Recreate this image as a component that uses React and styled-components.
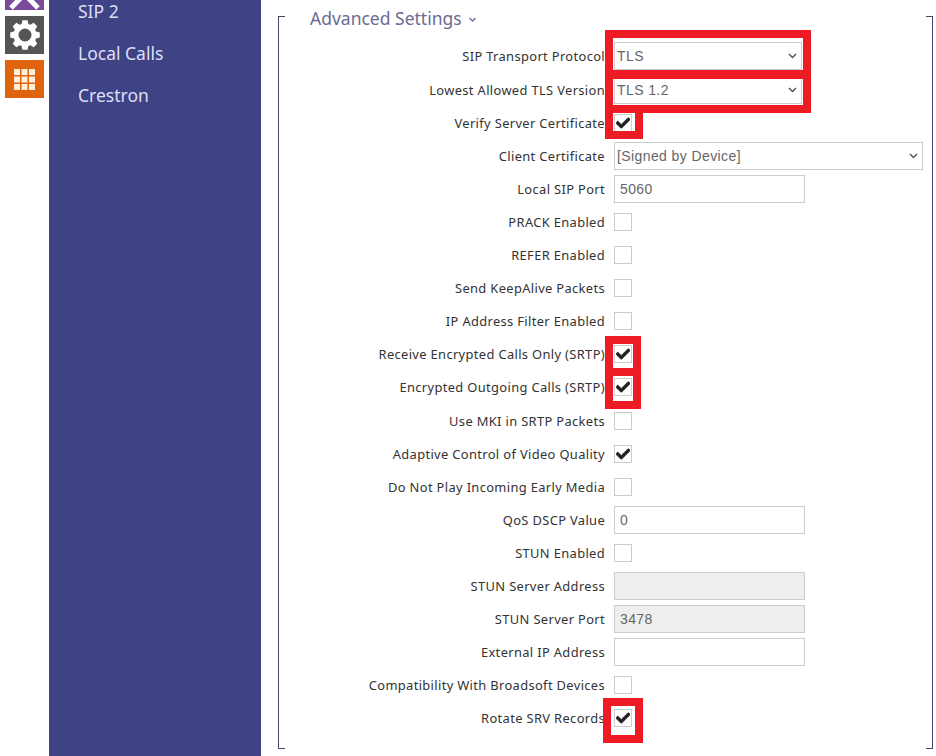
import styled, { createGlobalStyle } from "styled-components";
import { FaCheck } from "react-icons/fa";

const GlobalStyle = createGlobalStyle`
  html, body {
    margin: 0;
    height: 100%;
    background: #fff;
    overflow: hidden;
  }
  * {
    box-sizing: border-box;
  }
`;

const Page = styled.div`
  position: relative;
  display: flex;
  width: 936px;
  height: 756px;
  overflow: hidden;
  font-family: "Noto Sans", "Open Sans", sans-serif;
`;

const Rail = styled.div`
  display: flex;
  flex: none;
  flex-direction: column;
  gap: 6px;
  width: 49px;
  padding: 0 0 0 5px;
  margin-top: -28px;
`;

const Tile = styled.div`
  display: flex;
  align-items: center;
  justify-content: center;
  width: 39px;
  height: 38px;
  background: ${(p) => p.$color};
  color: #fff;
`;

const Nav = styled.nav`
  flex: none;
  width: 212px;
  height: 766px;
  margin-top: -10px;
  padding-left: 29px;
  background: #3f4285;
`;

const NavItem = styled.div`
  height: 42px;
  line-height: 42px;
  font-size: 17.5px;
  color: #dcdff8;
`;

const Content = styled.main`
  position: relative;
  flex: 1;
  min-width: 0;
  padding: 16px 3px 0 17px;
`;

const Section = styled.section`
  position: relative;
  display: flow-root;
  width: 655px;
  height: 733px;
  border-left: 1px solid #44466a;
  border-right: 1px solid #44466a;

  &::before,
  &::after {
    content: "";
    position: absolute;
    left: 0;
    right: 0;
    height: 1px;
    background: linear-gradient(
      to right,
      #44466a 6px,
      transparent 6px,
      transparent calc(100% - 6px),
      #44466a calc(100% - 6px)
    );
  }
  &::before {
    top: 0;
  }
  &::after {
    bottom: 0;
  }
`;

const Title = styled.h2`
  display: flex;
  align-items: center;
  gap: 7px;
  height: 22px;
  margin: -9px 0 0 31px;
  font-size: 17.5px;
  font-weight: 400;
  color: #6a6c92;
`;

const Form = styled.div`
  margin-top: 10.95px;
`;

const Row = styled.div`
  display: grid;
  grid-template-columns: 326px 1fr;
  column-gap: 9px;
  align-items: center;
  height: 33.1px;
`;

const Label = styled.div`
  text-align: right;
  font-size: 12.9px;
  letter-spacing: 0.35px;
  color: #333;
  white-space: nowrap;
`;

const SelectBox = styled.div`
  position: relative;
  width: ${(p) => p.$width}px;
  height: 28px;
`;

const NativeSelect = styled.select`
  display: block;
  width: 100%;
  height: 100%;
  padding: 0 0 0 2px;
  appearance: none;
  border: 1px solid #ccc;
  border-radius: 0;
  background: #fff;
  font-family: "Liberation Sans", Arial, sans-serif;
  font-size: 14px;
  letter-spacing: 0.4px;
  color: #666;
`;

const Chevron = styled.svg`
  position: absolute;
  top: 11px;
  right: 5px;
  width: 9px;
  height: 6px;
  fill: none;
  stroke: #555;
  stroke-width: 1.5;
`;

const TextInput = styled.input`
  display: block;
  width: 191px;
  height: 28px;
  padding: 0 5px;
  border: 1px solid #ccc;
  border-radius: 0;
  background: ${(p) => (p.disabled ? "#eee" : "#fff")};
  font-family: "Liberation Sans", Arial, sans-serif;
  font-size: 14px;
  letter-spacing: 0.4px;
  color: #666;
  outline: none;
`;

const CheckBox = styled.div`
  display: flex;
  align-items: center;
  justify-content: center;
  width: 18px;
  height: 18px;
  border: 1px solid #ccc;
  background: #fff;
  color: #222;

  svg {
    stroke: currentColor;
    stroke-width: 30;
  }
`;

const Highlight = styled.div`
  position: absolute;
  left: ${(p) => p.$x}px;
  top: ${(p) => p.$y}px;
  width: ${(p) => p.$w}px;
  height: ${(p) => p.$h}px;
  border-color: #ed1c24;
  border-style: solid;
  border-width: ${(p) => p.$border};
  pointer-events: none;
`;

const TitleChevron = styled.svg`
  width: 7px;
  height: 5px;
  margin-top: 2px;
  fill: none;
  stroke: #6a6c92;
  stroke-width: 1.3;
`;

const rows = [
  { label: "SIP Transport Protocol", type: "select", value: "TLS", width: 188 },
  { label: "Lowest Allowed TLS Version", type: "select", value: "TLS 1.2", width: 188 },
  { label: "Verify Server Certificate", type: "check", checked: true },
  { label: "Client Certificate", type: "select", value: "[Signed by Device]", width: 309 },
  { label: "Local SIP Port", type: "input", value: "5060" },
  { label: "PRACK Enabled", type: "check" },
  { label: "REFER Enabled", type: "check" },
  { label: "Send KeepAlive Packets", type: "check" },
  { label: "IP Address Filter Enabled", type: "check" },
  { label: "Receive Encrypted Calls Only (SRTP)", type: "check", checked: true },
  { label: "Encrypted Outgoing Calls (SRTP)", type: "check", checked: true },
  { label: "Use MKI in SRTP Packets", type: "check" },
  { label: "Adaptive Control of Video Quality", type: "check", checked: true },
  { label: "Do Not Play Incoming Early Media", type: "check" },
  { label: "QoS DSCP Value", type: "input", value: "0" },
  { label: "STUN Enabled", type: "check" },
  { label: "STUN Server Address", type: "input", value: "", disabled: true },
  { label: "STUN Server Port", type: "input", value: "3478", disabled: true },
  { label: "External IP Address", type: "input", value: "" },
  { label: "Compatibility With Broadsoft Devices", type: "check" },
  { label: "Rotate SRV Records", type: "check", checked: true },
];

const highlights = [
  { x: 605, y: 30, w: 206, h: 49, border: "8px 8px 9px 8px" },
  { x: 605, y: 70, w: 206, h: 43, border: "9px 8px 8px 8px" },
  { x: 605, y: 105, w: 38, h: 34, border: "8px" },
  { x: 605, y: 336, w: 36, h: 40, border: "8px" },
  { x: 605, y: 368, w: 36, h: 41, border: "8px" },
  { x: 603, y: 698, w: 40, h: 45, border: "8px" },
];

// 8 teeth, one pointing straight up
const gearPath = () => {
  const points = [];
  for (let i = 0; i < 8; i++) {
    const mid = (i * Math.PI) / 4 - Math.PI / 2;
    const corners = [
      [11.5, mid - 0.3],
      [15, mid - 0.17],
      [15, mid + 0.17],
      [11.5, mid + 0.3],
    ];
    corners.forEach(([r, a]) => {
      points.push(`${(16 + r * Math.cos(a)).toFixed(2)} ${(16 + r * Math.sin(a)).toFixed(2)}`);
    });
  }
  return `M${points.join("L")}ZM16 9.5a6.5 6.5 0 1 0 0 13a6.5 6.5 0 1 0 0-13Z`;
};

function Control({ row }) {
  if (row.type === "select") {
    return (
      <SelectBox $width={row.width}>
        <NativeSelect defaultValue={row.value}>
          <option>{row.value}</option>
        </NativeSelect>
        <Chevron viewBox="0 0 9 6">
          <path d="M1 1l3.5 3.5L8 1" />
        </Chevron>
      </SelectBox>
    );
  }
  if (row.type === "input") {
    return <TextInput readOnly disabled={row.disabled} value={row.value} />;
  }
  return <CheckBox>{row.checked && <FaCheck size={14} />}</CheckBox>;
}

export default function App() {
  return (
    <Page>
      <GlobalStyle />
      <Rail>
        <Tile $color="#7b4a9c">
          <svg width="39" height="38" viewBox="0 0 39 38">
            <path d="M6 8l27 28M33 8L6 36" stroke="#fff" strokeWidth="5" />
          </svg>
        </Tile>
        <Tile $color="#555">
          <svg width="32" height="32" viewBox="0 0 32 32">
            <path d={gearPath()} fill="#fff" fillRule="evenodd" />
          </svg>
        </Tile>
        <Tile $color="#e0630d">
          <svg width="21" height="21" viewBox="0 0 21 21" fill="#fdeed9">
            {[0, 7.5, 15].map((y) =>
              [0, 7.5, 15].map((x) => (
                <rect key={`${x}-${y}`} x={x} y={y} width="6" height="6" />
              ))
            )}
          </svg>
        </Tile>
      </Rail>
      <Nav>
        <NavItem>SIP 2</NavItem>
        <NavItem>Local Calls</NavItem>
        <NavItem>Crestron</NavItem>
      </Nav>
      <Content>
        <Section>
          <Title>
            Advanced Settings
            <TitleChevron viewBox="0 0 7 5">
              <path d="M.5 1L3.5 4l3-3" />
            </TitleChevron>
          </Title>
          <Form>
            {rows.map((row) => (
              <Row key={row.label}>
                <Label>{row.label}</Label>
                <Control row={row} />
              </Row>
            ))}
          </Form>
        </Section>
      </Content>
      {highlights.map((h) => (
        <Highlight key={`${h.x}-${h.y}`} $x={h.x} $y={h.y} $w={h.w} $h={h.h} $border={h.border} />
      ))}
    </Page>
  );
}
